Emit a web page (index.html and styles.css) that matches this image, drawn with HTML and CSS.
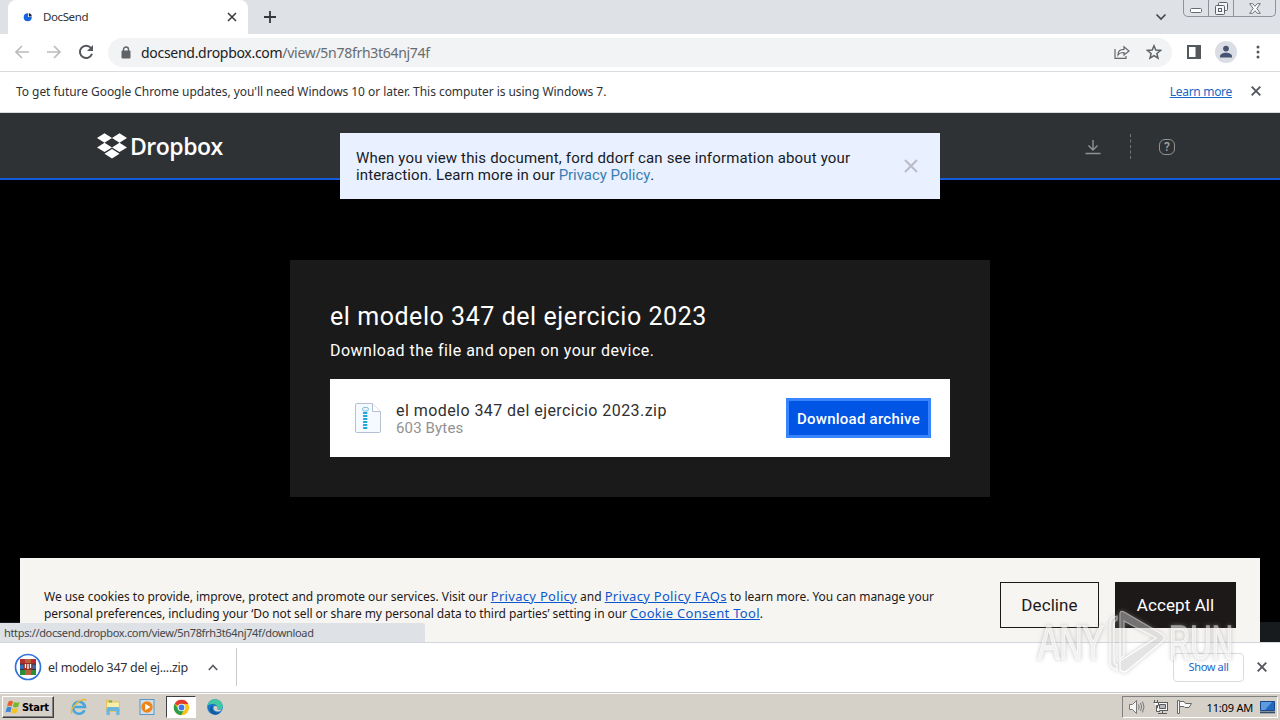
FILE: index.html
```html
<!DOCTYPE html>
<html lang="en">
<head>
  <meta charset="UTF-8">
  <meta name="viewport" content="width=device-width, initial-scale=1.0">
  <title>DocSend</title>
  <link rel="stylesheet" href="styles.css">
</head>
<body>
  <div class="screen">
    <!-- Tabs -->
    <div class="tabstrip">
      <div class="tab">
        <svg class="favicon" width="10" height="10" viewBox="0 0 10 10"><circle cx="4.7" cy="5.2" r="4" fill="#1565e0"/><path d="M5 5V0h5v5z" fill="#fff"/><path d="M5.8 4.4V1.2a3.4 3.4 0 0 1 3 3.2z" fill="#172540"/></svg>
        <span class="tab-title">DocSend</span>
        <svg width="10" height="10" viewBox="0 0 10 10" stroke="#34373b" stroke-width="1.5"><path d="M1 1l8 8M9 1L1 9"/></svg>
      </div>
      <svg class="new-tab" width="12" height="12" viewBox="0 0 12 12" stroke="#34373b" stroke-width="1.8"><path d="M6 0v12M0 6h12"/></svg>
      <svg class="tab-search" width="12" height="8" viewBox="0 0 12 8" fill="none" stroke="#45484c" stroke-width="1.7"><path d="M1.5 1.5L6 6l4.500-4.500"/></svg>
      <div class="window-buttons">
        <span class="win-btn"><svg width="13" height="5" viewBox="0 0 13 5"><rect x=".5" y=".5" width="11" height="4" rx="1" fill="#fff" stroke="#686c72"/></svg></span>
        <span class="win-btn"><svg width="13" height="13" viewBox="0 0 13 13" fill="#f4f5f7" stroke="#5d6167"><rect x="3.500" y=".5" width="9" height="8" rx="1"/><rect x=".5" y="3.500" width="9" height="9" rx="1"/><rect x="3.500" y="6.500" width="3" height="3"/></svg></span>
        <span class="win-btn wide"><svg width="12" height="11" viewBox="0 0 12 11"><path d="M.7.7h3L6 3.300 8.300.7h3L7.800 5.500l3.500 4.800h-3L6 7.700l-2.300 2.600h-3l3.500-4.800z" fill="#fff" stroke="#6b6f75"/></svg></span>
      </div>
    </div>

    <!-- Address bar -->
    <div class="toolbar">
      <svg width="16" height="14" viewBox="0 0 16 14" fill="none" stroke="#babcbe" stroke-width="1.700"><path d="M15 7H2M8 1L2 7l6 6"/></svg>
      <svg width="16" height="14" viewBox="0 0 16 14" fill="none" stroke="#babcbe" stroke-width="1.700"><path d="M1 7h13M8 1l6 6-6 6"/></svg>
      <svg width="16" height="16" viewBox="0 0 16 16"><path d="M13 4A6.200 6.200 0 1 0 14 9.800" fill="none" stroke="#54575b" stroke-width="2"/><path d="M15 1v6H9z" fill="#54575b"/></svg>
      <div class="omnibox">
        <svg width="10" height="13" viewBox="0 0 10 13"><path d="M2.500 5V3.500a2.500 2.500 0 0 1 5 0V5" fill="none" stroke="#5f6368" stroke-width="1.400"/><rect x=".5" y="4.600" width="9" height="7.900" rx="1" fill="#5f6368"/></svg>
        <span class="url"><b>docsend.dropbox.com</b>/view/5n78frh3t64nj74f</span>
        <svg width="16" height="16" viewBox="0 0 16 16" fill="none" stroke="#65686c" stroke-width="1.200"><path d="M1 5v9.400h11V12"/><path d="M4 11c0-4 2.200-5.700 6-5.700V2.700L15 7l-5 4V8.500C7 8.500 5.200 9 4 11z"/></svg>
        <svg class="star" width="16" height="16" viewBox="0 0 16 16" fill="none" stroke="#5f6368" stroke-width="1.500"><path d="M8 1.800l1.800 4.300 4.700.4-3.600 3 1.100 4.600L8 11.600l-4 2.500 1.100-4.600-3.600-3 4.700-.4z"/></svg>
      </div>
      <svg class="side-panel" width="14" height="14" viewBox="0 0 14 14"><rect x="1" y="1" width="12" height="12" fill="#fff" stroke="#54575b" stroke-width="2"/><path d="M8.500 1H14v12H8.500z" fill="#54575b"/></svg>
      <svg class="avatar" width="22" height="22" viewBox="0 0 22 22"><circle cx="11" cy="11" r="11" fill="#dadde3"/><circle cx="11" cy="7.600" r="2.900" fill="#475572"/><path d="M5 16.500v-1.300c0-2.200 3-3.500 6-3.500s6 1.300 6 3.500v1.300z" fill="#475572"/></svg>
      <svg width="4" height="14" viewBox="0 0 4 14" fill="#54575b"><circle cx="2" cy="2" r="1.500"/><circle cx="2" cy="7" r="1.500"/><circle cx="2" cy="12" r="1.500"/></svg>
    </div>

    <div class="infobar">
      <span class="infobar-text">To get future Google Chrome updates, you'll need Windows 10 or later. This computer is using Windows 7.</span>
      <a class="infobar-link" href="#">Learn more</a>
      <svg width="10" height="10" viewBox="0 0 10 10" stroke="#54575b" stroke-width="1.900"><path d="M.7.700l8.600 8.600M9.300.700L.7 9.300"/></svg>
    </div>

    <!-- Page -->
    <div class="page">
      <header class="site-header">
        <div class="brand">
          <svg width="30" height="26" viewBox="0 0 30 26" fill="#fff"><path d="M7.500.300L15 5 7.500 9.700 0 5zM22.500.300L30 5l-7.500 4.700L15 5zM7.500 9.700L15 14.400l-7.500 4.700L0 14.400zM22.500 9.700l7.500 4.700-7.500 4.700-7.500-4.700zM7.500 20.700L15 16l7.500 4.700-7.500 4.700z"/></svg>
          <span class="brand-name">Dropbox</span>
        </div>
        <div class="header-tools">
          <svg width="16" height="16" viewBox="0 0 16 16" fill="none" stroke="#909395" stroke-width="1.400"><path d="M8 1v10M3.500 6.500L8 11l4.500-4.500M.5 14.500h15"/></svg>
          <span class="divider"></span>
          <span class="help">?</span>
        </div>
      </header>
      <main class="viewer">
        <section class="card">
          <h1 class="card-title">el modelo 347 del ejercicio 2023</h1>
          <p class="card-text">Download the file and open on your device.</p>
          <div class="file">
            <svg width="28" height="32" viewBox="0 0 28 32"><path d="M3 1.500h15.500l8 8V29a1.500 1.500 0 0 1-1.500 1.500H3A1.500 1.500 0 0 1 1.500 29V3A1.500 1.500 0 0 1 3 1.500z" fill="#f4faff" stroke="#b5c0d5"/><path d="M18.500 1.500v8h8" fill="#fff" stroke="#b5c0d5"/><rect x="8.500" y="5.500" width="6" height="3.500" rx="1.700" fill="#e9f6ff" stroke="#7cb9df"/><path d="M11.200 10v18" stroke="#22a5da" stroke-width="4.200" stroke-dasharray="2 1"/></svg>
            <div class="file-info">
              <div class="file-name">el modelo 347 del ejercicio 2023.zip</div>
              <div class="file-size">603 Bytes</div>
            </div>
            <button class="download-btn">Download archive</button>
          </div>
        </section>
      </main>
      <footer class="page-footer"></footer>

      <div class="notice">
        <p class="notice-text"><span class="n1">When you view this document, ford ddorf can see information about your</span><br><span class="n2">interaction. Learn more in our <a href="#">Privacy Policy</a>.</span></p>
        <svg width="14" height="14" viewBox="0 0 14 14" stroke="#b9bcc5" stroke-width="2"><path d="M1 1l12 12M13 1L1 13"/></svg>
      </div>

      <div class="cookies">
        <p class="cookies-text"><span class="c1">We use cookies to provide, improve, protect and promote our services. Visit our <a href="#">Privacy Policy</a> and <a href="#">Privacy Policy FAQs</a> to learn more. You can manage your</span><br><span class="c2">personal preferences, including your ‘Do not sell or share my personal data to third parties’ setting in our <a href="#">Cookie Consent Tool</a>.</span></p>
        <button class="cookie-btn decline">Decline</button>
        <button class="cookie-btn accept">Accept All</button>
      </div>

      <div class="status-bubble"><span>https://docsend.dropbox.com/view/5n78frh3t64nj74f/download</span></div>
    </div>

    <!-- Downloads shelf -->
    <div class="shelf">
      <div class="shelf-item">
        <svg width="28" height="28" viewBox="0 0 28 28"><circle cx="14" cy="14" r="12.500" fill="#fff" stroke="#3173dc" stroke-width="1.700"/><path d="M6 6h16v5H6z" fill="#b52c31"/><path d="M6 11h16v5.500H6z" fill="#346bb8"/><path d="M6 16.500h16V22H6z" fill="#2d8b3c"/><path d="M6 11.200h16M6 16.500h16" stroke="#333"/><path d="M11 6h6v16h-6z" fill="#b76238"/><path d="M9.500 10h9v7h-9z" fill="#973020"/><path d="M11.500 11v4M14 11v5M16.500 11v4" stroke="#fff" stroke-width="1.300"/></svg>
        <span class="shelf-name">el modelo 347 del ej....zip</span>
        <svg width="10" height="7" viewBox="0 0 10 7" fill="none" stroke="#5a5d61" stroke-width="1.700"><path d="M.8 6L5 1.500 9.200 6"/></svg>
      </div>
      <button class="show-all">Show all</button>
      <svg width="10" height="10" viewBox="0 0 10 10" stroke="#54575b" stroke-width="1.900"><path d="M.7.700l8.600 8.600M9.300.700L.7 9.300"/></svg>
    </div>

    <!-- Taskbar -->
    <div class="taskbar">
      <div class="start">
        <svg width="16" height="16" viewBox="0 0 16 16"><path d="M3.500 2.500Q6 1 8 2.500L6.800 7.300Q4.500 6 2 7.500z" fill="#e8612c"/><path d="M9 3q2.500 1.300 5.500 0l-1.300 4.800q-3 1.200-5.300 0z" fill="#76b82a"/><path d="M1.800 8.500q2.500-1.300 4.800 0l-1.300 5q-2-1.700-4.800 0z" fill="#3c88d8"/><path d="M7.500 9q2.500 1.300 5.500 0l-1.300 4.800q-3 1.200-5.300 0z" fill="#f5c324"/></svg>
        <span>Start</span>
      </div>
      <div class="pins">
        <span class="pin"><svg width="18" height="18" viewBox="0 0 18 18" fill="none"><path d="M14.500 12.300A6 6 0 1 1 15 9H4.500" stroke="#48a7dc" stroke-width="2.600"/><path d="M2 15.500C-1 11 11-1 16.500 2.300" stroke="#e9ba38" stroke-width="1.500"/></svg></span>
        <span class="pin"><svg width="18" height="18" viewBox="0 0 18 18"><path d="M2 2h6l1 1.500h7V14H2z" fill="#e6c65c"/><path d="M3 4.500h12v5H3z" fill="#f9edaa"/><path d="M5 2.500h3v2H5z" fill="#6fb451"/><path d="M2.500 17v-6q0-2 2-2h9q2 0 2 2v6h-3.300v-4H5.800v4z" fill="#6bb6df"/></svg></span>
        <span class="pin"><svg width="18" height="18" viewBox="0 0 18 18"><rect x="2" y="1.500" width="14" height="15" fill="#cfdeea" stroke="#5b97c6"/><circle cx="9" cy="9" r="5.700" fill="#ef8519"/><path d="M7.200 5.700L12.500 9l-5.300 3.300z" fill="#fff"/></svg></span>
        <span class="pin active"><svg width="17" height="17" viewBox="0 0 17 17"><circle cx="8.500" cy="8.500" r="7.700" fill="#fbc116"/><path d="M8.500 8.500L1.700 4.800A7.700 7.700 0 0 1 15.300 5H8.500z" fill="#e33b2e"/><path d="M1.700 4.800A7.700 7.700 0 0 0 8 16.200l3.300-5.700-5.500.3z" fill="#2d9d4c"/><circle cx="8.500" cy="8.500" r="3.800" fill="#fff"/><circle cx="8.500" cy="8.500" r="2.900" fill="#3c79e6"/></svg></span>
        <span class="pin"><svg width="18" height="18" viewBox="0 0 18 18"><circle cx="9" cy="9" r="7.800" fill="#1677c9"/><path d="M1.500 7.500C3 1.500 9 .2 13 2.300c4 2 5 7.500 2 9-2 1-4.300.2-3.700-1.300C12 6 5.500 4.500 1.500 7.500z" fill="#45c6a2"/><path d="M7 8c-2 3 .5 7.500 7 6.500-3 3.700-9 2.300-10-2C3.500 10 5 8 7 8z" fill="#145a9d"/><path d="M8 8.200c2.500-1 4 .8 3.300 2.300-.3 1.500 2.500 2 4.700.7-1 2-3 2.700-5 2.300-3-.5-4.500-3-3-5.300z" fill="#d6d2ca"/></svg></span>
      </div>
      <div class="tray">
        <svg width="17" height="16" viewBox="0 0 17 16" fill="#f5f5f3" stroke="#777"><path d="M1.500 5.500h3l4-4v13l-4-4h-3z"/><path d="M10.500 5.500q1.500 2.500 0 5M12.500 4q2.500 4 0 8M14.500 2.500q3 5.500 0 11" fill="none"/></svg>
        <svg width="17" height="16" viewBox="0 0 17 16" fill="#f7f7f7" stroke="#5b5b5b"><rect x="5.500" y="3.500" width="10" height="8"/><path d="M7.500 5.500h6v4h-6z" fill="#b7babd"/><path d="M6 14.500h9M10.500 12v2"/><path d="M1.500 3.500h5v3h-2v6H8M2.500 1v2M5.500 1v2"/></svg>
        <svg width="17" height="16" viewBox="0 0 17 16" fill="#f9f9f9" stroke="#686868"><path d="M1.500 1.500h2v13h-2z"/><path d="M3.500 2.500H8l1.500 2h6L13 8.500H9l-1-1H3.500z"/></svg>
        <span class="clock">11:09 AM</span>
        <svg width="15" height="13" viewBox="0 0 15 13"><path d="M.5.500h14v9H.5z" fill="#2369bf" stroke="#184889"/><path d="M1 1h11L5 9H1z" fill="#5e9ce0"/><path d="M0 10.500h15v1.800H0z" fill="#354c6b"/></svg>
      </div>
    </div>

    <svg class="watermark" width="210" height="76" viewBox="0 0 210 76">
      <g class="mark-text">
        <text x="6" y="55" textLength="66" lengthAdjust="spacingAndGlyphs">ANY</text>
        <text x="137" y="55" textLength="64" lengthAdjust="spacingAndGlyphs">RUN</text>
      </g>
      <g class="mark-shape">
        <path d="M88 10q0-4 4-2l38 22q5 3 1 7L96 66q-4 4-8 0v-9l36-23-32-17v35l-4 3z"/>
        <path d="M85 12q-7 1-7 8v38q0 6 7 8v-5q-3-1-3-5V21q0-4 3-5z"/>
      </g>
    </svg>
  </div>
</body>
</html>
```

FILE: styles.css
```css
* { box-sizing: border-box; }
body {
  margin: 0;
  font-family: "Noto Sans", "Open Sans", sans-serif;
  font-size: 12px;
  color: #303236;
}
svg { display: block; flex-shrink: 0; }
p, h1 { margin: 0; }
button { font-family: inherit; padding: 0; }
.screen {
  position: relative;
  width: 1280px;
  height: 720px;
  overflow: hidden;
  display: flex;
  flex-direction: column;
  white-space: nowrap;
}

/* tabs */
.tabstrip {
  height: 34px;
  flex-shrink: 0;
  display: flex;
  align-items: center;
  background: #dee1e6;
  padding-left: 8px;
}
.tab {
  display: flex;
  align-items: center;
  width: 240px;
  height: 34px;
  padding: 0 11px 0 15px;
  background: #fff;
  border-radius: 8px 8px 0 0;
}
.tab-title { flex: 1; margin: -1px 0 0 10px; font-size: 11.5px; letter-spacing: -0.7px; letter-spacing: -0.4px; }
.new-tab { margin-left: 16px; }
.tab-search { margin-left: auto; margin-right: 16px; }
.window-buttons {
  display: flex;
  align-self: flex-start;
  height: 17px;
  width: 93px;
  margin-right: 4px;
  border: 1px solid #8e9299;
  border-top: none;
  border-radius: 0 0 5px 5px;
}
.win-btn {
  width: 25px;
  display: flex;
  align-items: center;
  justify-content: center;
  border-right: 1px solid #8e9299;
}
.win-btn:first-child { align-items: flex-end; padding-bottom: 3px; }
.win-btn.wide { width: 41px; border: none; }

/* address bar */
.toolbar {
  height: 38px;
  flex-shrink: 0;
  display: flex;
  align-items: center;
  padding: 0 20px 1px 14px;
  gap: 16px;
  background: #fff;
  border-bottom: 1px solid #d9dbde;
}
.omnibox {
  flex: 1;
  height: 29px;
  display: flex;
  align-items: center;
  margin-left: -2px;
  padding: 0 10px 0 13px;
  border-radius: 15px;
  background: #f1f3f4;
}
.url { flex: 1; margin-left: 10px; font-size: 14px; color: #686b6f; letter-spacing: -0.29px; }
.url b { font-weight: normal; color: #202124; }
.star { margin-left: 16px; }
.side-panel { margin: 0 1px 0 -1px; }
.avatar { margin: 0 3px 0 -3px; }

.infobar {
  height: 41px;
  flex-shrink: 0;
  display: flex;
  align-items: center;
  padding: 0 19px 2px 16px;
  background: #fff;
  border-bottom: 1px solid #d5dadd;
}
.infobar-text { flex: 1; font-size: 12px; letter-spacing: -0.05px; }
.infobar-link { margin-right: 19px; font-size: 12px; letter-spacing: -0.3px; color: #1967c5; }

/* page */
.page {
  position: relative;
  height: 529px;
  flex-shrink: 0;
  display: flex;
  flex-direction: column;
  background: #000;
  font-family: Roboto, "Liberation Sans", sans-serif;
}
.site-header {
  display: flex;
  justify-content: space-between;
  height: 67px;
  padding: 0 104px 0 97px;
  background: #2f3235;
  border-bottom: 2px solid #155bdf;
}
.brand { display: flex; align-items: center; gap: 3px; }
.brand-name {
  font-family: "Open Sans", sans-serif;
  font-size: 23px;
  font-weight: 600;
  letter-spacing: -0.5px;
  line-height: 26px;
  color: #fff;
}
.header-tools { display: flex; align-items: center; padding-top: 2px; }
.divider { height: 25px; margin: 0 28px 0 29px; border-left: 1px dashed #74777a; }
.help {
  width: 16px;
  height: 16px;
  margin-right: 1px;
  border: 1.5px solid #909395;
  border-radius: 6px;
  color: #a1a4a6;
  font-size: 12px;
  font-weight: 500;
  line-height: 14px;
  text-align: center;
}
.viewer { flex: 1; display: flex; justify-content: center; align-items: flex-start; padding-top: 80px; }
.card { width: 700px; height: 237px; padding: 41px 40px 40px; background: #1a1a1a; color: #fff; }
.card-title { font-size: 25px; font-weight: 400; line-height: 32px; letter-spacing: 0.55px; }
.card-text { margin-top: 9px; font-size: 16px; line-height: 18px; letter-spacing: 0.48px; }
.file {
  display: flex;
  align-items: center;
  height: 78px;
  margin-top: 19px;
  padding: 0 19px 0 24px;
  background: #fff;
}
.file-info { flex: 1; margin-left: 14px; padding-top: 2px; }
.file-name { color: #303030; font-size: 16px; line-height: 18px; letter-spacing: 0.44px; }
.file-size { color: #929292; font-size: 15px; line-height: 17px; letter-spacing: 0.15px; }
.download-btn {
  width: 145px;
  height: 40px;
  padding-top: 2px;
  border: 3px solid #3984ff;
  background: #0055e5;
  color: #fff;
  font-size: 15px;
  font-weight: 500;
  letter-spacing: 0.25px;
}
.page-footer { height: 20px; background: #171b1e; }

.notice {
  position: absolute;
  top: 20px;
  left: 340px;
  width: 600px;
  height: 66px;
  display: flex;
  align-items: center;
  justify-content: space-between;
  padding: 0 22px 0 16px;
  background: #e9f0ff;
  color: #171b25;
}
.notice-text { padding-top: 2px; font-size: 15px; line-height: 17px; }
.n1 { letter-spacing: 0.155px; }
.n2 { letter-spacing: 0.1px; }
.notice-text a { color: #397fb0; text-decoration: none; letter-spacing: -0.05px; }

.cookies {
  position: absolute;
  left: 20px;
  bottom: 0;
  width: 1240px;
  height: 84px;
  display: flex;
  align-items: flex-start;
  padding: 24px 24px 0;
  background: #f7f5f2;
  color: #1e1919;
}
.cookies-text { flex: 1; padding-top: 6px; font-family: "Noto Sans", sans-serif; font-size: 12px; line-height: 17px; }
.c1 { letter-spacing: -0.03px; }
.c2 { letter-spacing: -0.07px; }
.cookies-text a { color: #0b58cd; font-size: 13px; letter-spacing: 0.3px; }
.cookie-btn { height: 46px; border: 1px solid #1e1919; font-size: 17px; letter-spacing: 0.1px; }
.decline { width: 99px; background: #f7f5f2; color: #1e1919; }
.accept { width: 121px; margin-left: 16px; background: #1e1919; color: #fff; }

.status-bubble {
  position: absolute;
  left: 0;
  bottom: 0;
  width: 425px;
  height: 19px;
  padding-left: 4px;
  background: #dee1e6;
  border-radius: 0 3px 0 0;
  font-family: "Noto Sans", sans-serif;
  font-size: 11px;
  letter-spacing: -0.34px;
  line-height: 19px;
  color: #44474b;
}

/* downloads */
.shelf {
  height: 50px;
  flex-shrink: 0;
  display: flex;
  align-items: center;
  padding: 0 13px 1px 14px;
  background: #fff;
  border-top: 1px solid #d2d5d9;
}
.shelf-item { display: flex; align-items: center; width: 223px; height: 38px; border-right: 1px solid #c8cacd; }
.shelf-name { width: 160px; margin-left: 6px; font-size: 12.5px; letter-spacing: -0.3px; }
.show-all {
  width: 71px;
  height: 29px;
  margin: 0 13px 0 auto;
  padding-bottom: 1px;
  border: 1px solid #d9dbdf;
  border-radius: 4px;
  background: #fff;
  color: #1a66cc;
  font-size: 11px;
  letter-spacing: -0.35px;
}

/* taskbar */
.taskbar {
  height: 28px;
  flex-shrink: 0;
  display: flex;
  align-items: center;
  padding: 1px 2px 0;
  background: #d5d0c8;
  border-top: 1px solid #c5c6c7;
  box-shadow: inset 0 1px #fff;
}
.start {
  width: 52px;
  height: 22px;
  display: flex;
  align-items: center;
  gap: 1px;
  padding-left: 2px;
  border: 1px solid #fff;
  border-right-color: #404040;
  border-bottom-color: #404040;
  box-shadow: inset -1px -1px #808080;
  font-family: "DejaVu Sans Condensed", "DejaVu Sans", sans-serif;
  font-size: 11px;
  font-weight: 700;
  letter-spacing: -0.3px;
  color: #000;
}
.pins { display: flex; gap: 4px; margin-left: 10px; }
.pin { width: 30px; height: 22px; display: flex; align-items: center; justify-content: center; }
.pin.active { background: #fff; border: 1px solid #404040; border-right-color: #fff; border-bottom-color: #fff; }
.tray {
  display: flex;
  align-items: center;
  gap: 7px;
  width: 156px;
  height: 22px;
  margin-left: auto;
  padding: 0 2px 0 5px;
  border: 1px solid #808080;
  border-right-color: #fff;
  border-bottom-color: #fff;
}
.clock { flex: 1; text-align: right; font-size: 11px; letter-spacing: -0.2px; color: #000; }

.watermark { position: absolute; left: 1032px; top: 604px; opacity: 0.6; filter: drop-shadow(0 0 2px #999); pointer-events: none; }
.mark-text { font-family: "Liberation Sans", sans-serif; font-size: 49px; fill: #e8e8e8; stroke: #f6f6f6; stroke-width: 1.5; }
.mark-shape { fill: #dcdcdc; fill-opacity: 0.6; stroke: #fff; stroke-width: 1.2; }
```
